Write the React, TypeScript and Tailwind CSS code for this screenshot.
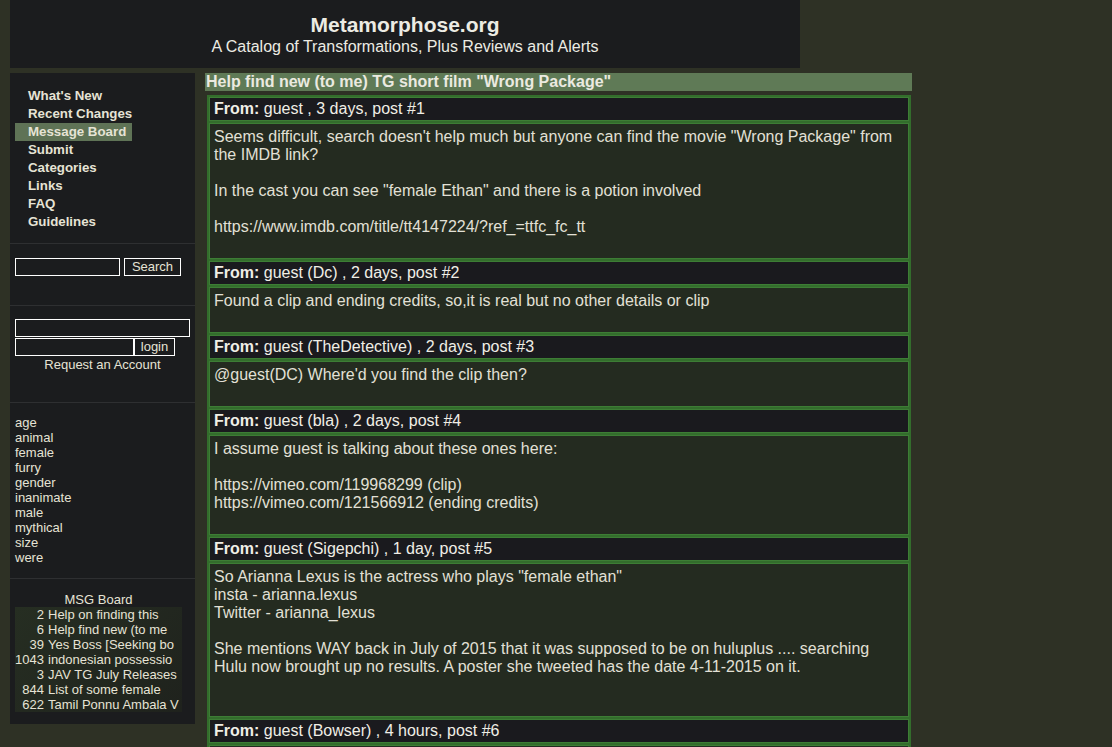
import React from 'react';

const navItems = ["What's New", 'Recent Changes', 'Message Board', 'Submit', 'Categories', 'Links', 'FAQ', 'Guidelines'];
const categories = ['age', 'animal', 'female', 'furry', 'gender', 'inanimate', 'male', 'mythical', 'size', 'were'];
const threads: [string, string][] = [
  ['2', 'Help on finding this'],
  ['6', 'Help find new (to me'],
  ['39', 'Yes Boss [Seeking bo'],
  ['1043', 'indonesian possessio'],
  ['3', 'JAV TG July Releases'],
  ['844', 'List of some female'],
  ['622', 'Tamil Ponnu Ambala V'],
];

type Post = { from: string; when: string; n: number; lines: string[] };

const posts: Post[] = [
  {
    from: 'guest',
    when: '3 days',
    n: 1,
    lines: [
      'Seems difficult, search doesn\'t help much but anyone can find the movie "Wrong Package" from the IMDB link?',
      '',
      'In the cast you can see "female Ethan" and there is a potion involved',
      '',
      'https://www.imdb.com/title/tt4147224/?ref_=ttfc_fc_tt',
      '',
    ],
  },
  { from: 'guest (Dc)', when: '2 days', n: 2, lines: ['Found a clip and ending credits, so,it is real but no other details or clip', ''] },
  { from: 'guest (TheDetective)', when: '2 days', n: 3, lines: ["@guest(DC) Where'd you find the clip then?", ''] },
  {
    from: 'guest (bla)',
    when: '2 days',
    n: 4,
    lines: ['I assume guest is talking about these ones here:', '', 'https://vimeo.com/119968299 (clip)', 'https://vimeo.com/121566912 (ending credits)', ''],
  },
  {
    from: 'guest (Sigepchi)',
    when: '1 day',
    n: 5,
    lines: [
      'So Arianna Lexus is the actress who plays "female ethan"',
      'insta - arianna.lexus',
      'Twitter - arianna_lexus',
      '',
      'She mentions WAY back in July of 2015 that it was supposed to be on huluplus .... searching Hulu now brought up no results. A poster she tweeted has the date 4-11-2015 on it.',
      '',
      '',
    ],
  },
  { from: 'guest (Bowser)', when: '4 hours', n: 6, lines: ['', ''] },
];

const Sep = () => <div className="h-px bg-[#2e2f31]" />;

const PostBlock = ({ p }: { p: Post }) => (
  <>
    <div className="border border-[#3d7d35] bg-[#1a1a1e] px-[4px] py-[2px] leading-[18px] text-[#f0eee6]">
      <b>From:</b> {p.from} , {p.when}, post #{p.n}
    </div>
    <div className="border border-[#3d7d35] bg-[#242b20] p-[4px] leading-[18px] text-[#e2e0d6]">
      {p.lines.map((l, i) => (
        <div key={i} className="min-h-[18px]">
          {l}
        </div>
      ))}
    </div>
  </>
);

export default function App() {
  return (
    <div className="h-screen overflow-hidden bg-[#2e3125] font-['Liberation_Sans',Arial,sans-serif] text-[#e6e3d5]">
      <header className="ml-[10px] w-[790px] h-[68px] bg-[#1b1c1e] flex flex-col items-center pt-[12px]">
        <h1 className="text-[21px] font-bold leading-[26px] text-[#ecebe3]">Metamorphose.org</h1>
        <p className="text-[16px] leading-[18px] text-[#ecebe3]">A Catalog of Transformations, Plus Reviews and Alerts</p>
      </header>

      <div className="flex mt-[5px]">
        <aside className="ml-[10px] w-[185px] h-[651px] bg-[#1b1c1e] text-[13px]">
          <nav className="pt-[14px] pb-[12px] font-bold leading-[18px] text-[13.3px]">
            {navItems.map((item) => (
              <div key={item} className="pl-[5px]">
                <span className={`inline-block pl-[13px] pr-[6px] ${item === 'Message Board' ? 'bg-[#5f7356]' : ''}`}>{item}</span>
              </div>
            ))}
          </nav>
          <Sep />
          <div className="flex gap-[4px] px-[5px] pt-[14px] pb-[29px]">
            <input className="w-[105px] h-[18px] border border-white bg-transparent outline-none" />
            <button className="w-[57px] h-[18px] border border-white text-[13px] leading-[16px] text-[#e6e3d5]">Search</button>
          </div>
          <Sep />
          <div className="px-[5px] pt-[13px] pb-[29px]">
            <input className="block w-[175px] h-[18px] border border-white bg-transparent outline-none" />
            <div className="flex mt-px">
              <input className="w-[119px] h-[18px] border border-white bg-transparent outline-none" />
              <button className="w-[41px] h-[18px] border border-white text-[13px] leading-[16px] text-[#e6e3d5]">login</button>
            </div>
            <div className="text-center w-[175px] leading-[16px] mt-px">Request an Account</div>
          </div>
          <Sep />
          <ul className="px-[5px] pt-[12px] pb-[13px] leading-[15px]">
            {categories.map((c) => (
              <li key={c}>{c}</li>
            ))}
          </ul>
          <Sep />
          <div className="px-[5px] pt-[13px]">
            <div className="text-center w-[167px] leading-[15px]">MSG Board</div>
            <div className="w-[167px] bg-[linear-gradient(135deg,#262e22,#1f221d)] leading-[15px]">
              {threads.map(([n, t]) => (
                <div key={t} className="flex whitespace-nowrap">
                  <span className="w-[29px] text-right">{n}</span>
                  <span className="pl-[4px]">{t}</span>
                </div>
              ))}
            </div>
          </div>
        </aside>

        <main className="ml-[10px] w-[707px] text-[16px]">
          <div className="bg-[#5f7a56] h-[18px] leading-[18px] pl-px font-bold text-[#ebeae0]">
            Help find new (to me) TG short film "Wrong Package"
          </div>
          <div className="mt-[4px] ml-[2px] w-[704px] bg-[#336d2c] p-[2px] flex flex-col gap-[2px]">
            {posts.map((p) => (
              <PostBlock key={p.n} p={p} />
            ))}
          </div>
        </main>
      </div>
    </div>
  );
}
